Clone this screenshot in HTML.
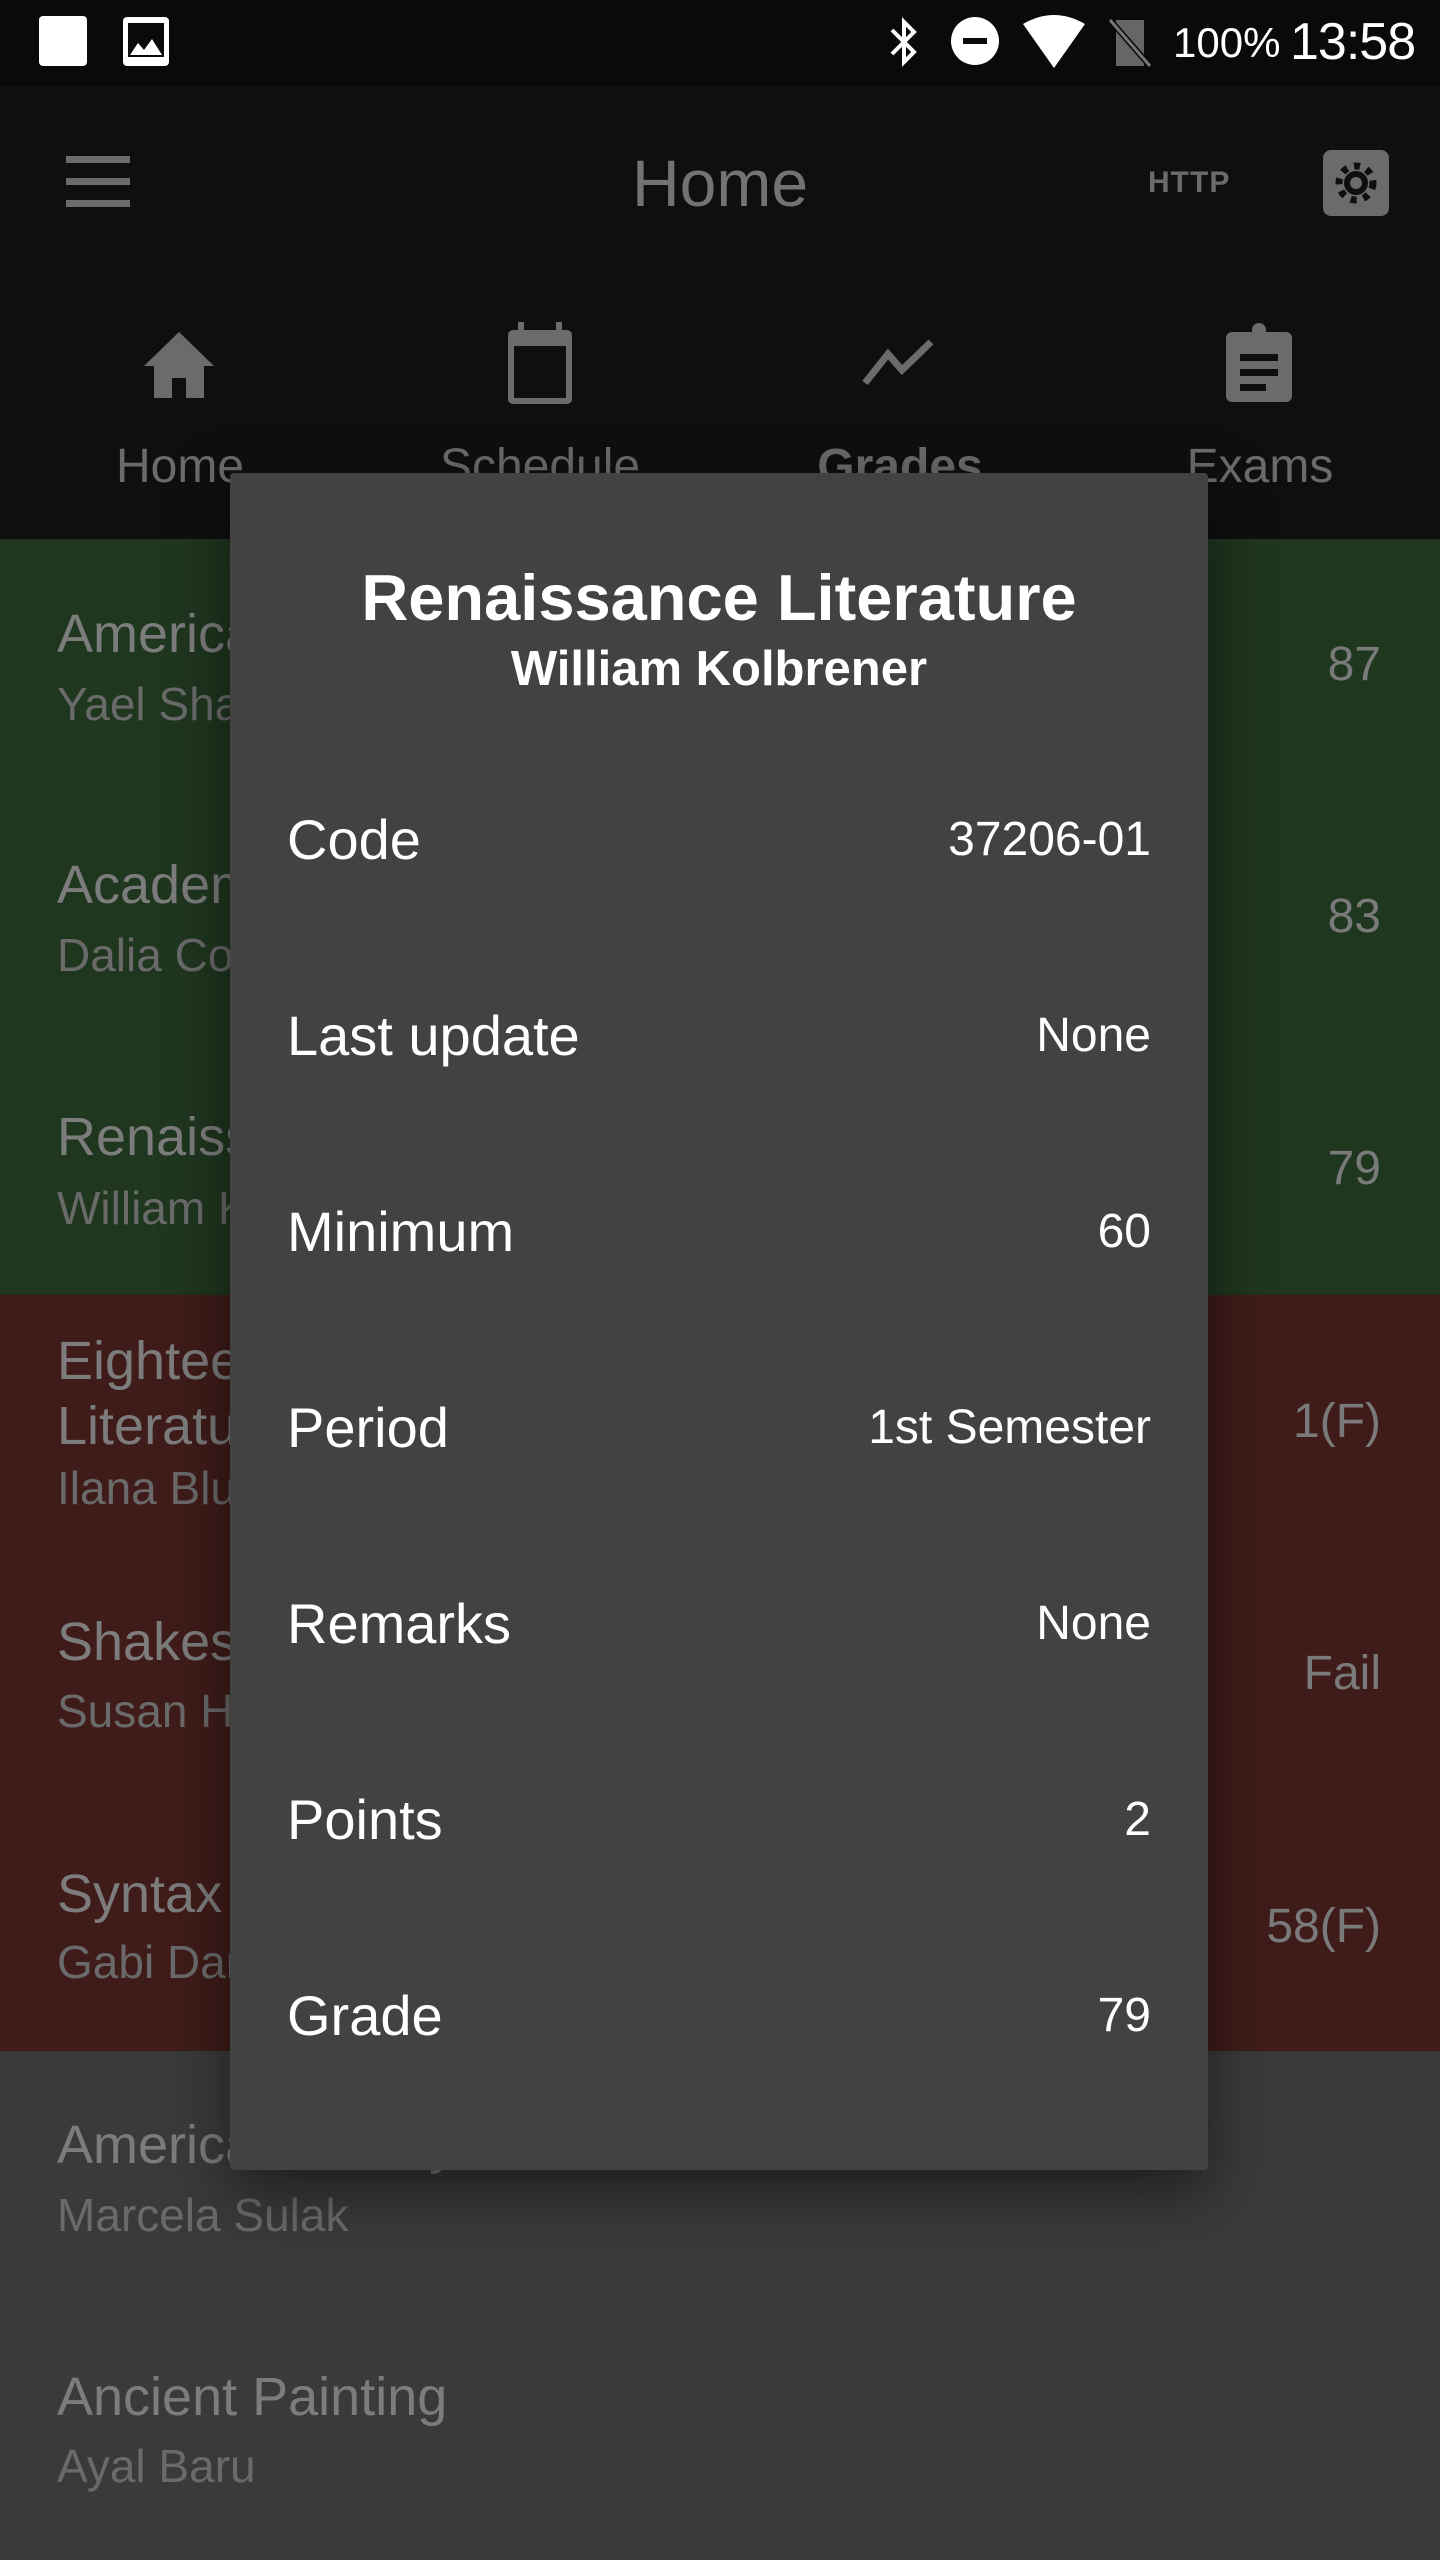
<!DOCTYPE html>
<html><head><meta charset="utf-8">
<style>
*{margin:0;padding:0;box-sizing:border-box}
body{width:1440px;height:2560px;overflow:hidden;background:#3a3a3a;font-family:"Liberation Sans",sans-serif;position:relative}
.abs{position:absolute}
.sb{left:0;top:0;width:1440px;height:86px;background:#0a0a0a}
.ab{left:0;top:86px;width:1440px;height:453px;background:#0f0f0f}
.green{left:0;top:539px;width:1440px;height:756px;background:#1f361f}
.red{left:0;top:1295px;width:1440px;height:756px;background:#3f1c19}
.gray{left:0;top:2051px;width:1440px;height:509px;background:#3a3a3a}
.t{position:absolute;left:57px;color:#7c7c7c;font-size:54px;white-space:nowrap;line-height:1}
.s{position:absolute;left:57px;color:#6a6a6a;font-size:46px;white-space:nowrap;line-height:1}
.g{position:absolute;right:59px;color:#7a7a7a;font-size:48px;line-height:1}
.tab{position:absolute;top:443px;color:#6b6b6b;font-size:48px;width:360px;text-align:center;line-height:1}
.dlg{left:230px;top:473px;width:978px;height:1697px;background:#424242;border-radius:4px;box-shadow:0 20px 60px rgba(0,0,0,.5)}
.row{position:absolute;left:57px;right:57px;height:80px;color:#fff}
.row .l{position:absolute;left:0;top:0;font-size:56px;line-height:80px}
.row .v{position:absolute;right:0;top:0;font-size:48px;line-height:80px}
</style></head><body>
<div class="abs sb"></div>
<div class="abs ab"></div>
<div class="abs green"></div>
<div class="abs red"></div>
<div class="abs gray"></div>

<!-- status bar -->
<div class="abs" style="left:39px;top:16px;width:48px;height:50px;background:#fff;border-radius:4px"></div>
<svg class="abs" style="left:123px;top:17px" width="46" height="49" viewBox="0 0 46 49"><rect width="46" height="49" rx="4" fill="#fff"/><rect x="5" y="6" width="36" height="34" fill="#0a0a0a"/><path d="M7 38 L15 26 L21 33 L29 22 L39 38Z" fill="#fff"/></svg>
<svg class="abs" style="left:884px;top:14px" width="40" height="56" viewBox="0 0 40 56"><path d="M8 16 L30 38 L20 48 L20 8 L30 18 L8 40" fill="none" stroke="#fff" stroke-width="4"/></svg>
<svg class="abs" style="left:950px;top:16px" width="50" height="50"><circle cx="25" cy="25" r="24" fill="#fff"/><rect x="13" y="22" width="24" height="6" fill="#0a0a0a"/></svg>
<svg class="abs" style="left:1023px;top:14px" width="62" height="54"><path d="M0 10 Q31 -8 62 10 L31 54Z" fill="#fff"/></svg>
<svg class="abs" style="left:1108px;top:18px" width="44" height="50"><path d="M8 2 H36 V48 H8Z" fill="#666"/><path d="M2 2 L42 48" stroke="#0a0a0a" stroke-width="6"/><path d="M2 2 L42 48" stroke="#777" stroke-width="3"/></svg>
<div class="abs" style="left:1173px;top:18px;color:#fff;font-size:42px;line-height:50px">100%</div>
<div class="abs" style="left:1290px;top:14px;color:#fff;font-size:52px;line-height:56px;letter-spacing:-1px">13:58</div>

<!-- toolbar -->
<div class="abs" style="left:66px;top:156px;width:64px;height:7px;background:#6b6b6b"></div>
<div class="abs" style="left:66px;top:178px;width:64px;height:7px;background:#6b6b6b"></div>
<div class="abs" style="left:66px;top:200px;width:64px;height:7px;background:#6b6b6b"></div>
<div class="abs" style="left:0;width:1440px;top:148px;text-align:center;color:#737373;font-size:66px;line-height:70px">Home</div>
<div class="abs" style="left:1148px;top:166px;color:#6b6b6b;font-size:30px;font-weight:bold;line-height:34px;letter-spacing:1px">HTTP</div>
<svg class="abs" style="left:1323px;top:150px" width="66" height="66" viewBox="0 0 66 66"><rect width="66" height="66" rx="8" fill="#6b6b6b"/><circle cx="33" cy="33" r="17" fill="none" stroke="#0f0f0f" stroke-width="7" stroke-dasharray="6 7"/><circle cx="33" cy="33" r="12" fill="#0f0f0f"/><circle cx="33" cy="33" r="6" fill="#6b6b6b"/></svg>

<!-- tabs -->
<svg class="abs" style="left:144px;top:328px" width="70" height="70" viewBox="0 0 70 70"><path d="M35 4 L70 38 H60 V70 H42 V50 H28 V70 H10 V38 H0Z" fill="#6b6b6b"/></svg>
<svg class="abs" style="left:504px;top:322px" width="72" height="84" viewBox="0 0 72 84"><rect x="4" y="8" width="64" height="74" rx="5" fill="#6b6b6b"/><rect x="10" y="24" width="52" height="52" fill="#0f0f0f"/><rect x="14" y="0" width="6" height="12" fill="#6b6b6b"/><rect x="52" y="0" width="6" height="12" fill="#6b6b6b"/></svg>
<svg class="abs" style="left:862px;top:338px" width="72" height="48" viewBox="0 0 72 48"><path d="M3 45 L26 16 L40 32 L69 4" fill="none" stroke="#6b6b6b" stroke-width="7"/></svg>
<svg class="abs" style="left:1226px;top:322px" width="66" height="80" viewBox="0 0 66 80"><rect x="0" y="10" width="66" height="70" rx="6" fill="#6b6b6b"/><circle cx="33" cy="8" r="7" fill="#6b6b6b"/><rect x="14" y="32" width="38" height="7" fill="#0f0f0f"/><rect x="14" y="47" width="38" height="7" fill="#0f0f0f"/><rect x="14" y="62" width="26" height="7" fill="#0f0f0f"/></svg>
<div class="tab" style="left:0">Home</div>
<div class="tab" style="left:360px">Schedule</div>
<div class="tab" style="left:720px;font-weight:bold">Grades</div>
<div class="tab" style="left:1080px">Exams</div>

<!-- list -->
<div class="t" style="top:607px">American Literature</div><div class="s" style="top:681px">Yael Shapira</div><div class="g" style="top:641px">87</div>
<div class="t" style="top:858px">Academic Writing</div><div class="s" style="top:932px">Dalia Cohen</div><div class="g" style="top:893px">83</div>
<div class="t" style="top:1110px">Renaissance Literature</div><div class="s" style="top:1185px">William Kolbrener</div><div class="g" style="top:1145px">79</div>
<div class="t" style="top:1334px">Eighteenth Century</div><div class="t" style="top:1399px">Literature</div><div class="s" style="top:1465px">Ilana Blumberg</div><div class="g" style="top:1398px">1(F)</div>
<div class="t" style="top:1615px">Shakespeare</div><div class="s" style="top:1688px">Susan Handelman</div><div class="g" style="top:1650px">Fail</div>
<div class="t" style="top:1867px">Syntax</div><div class="s" style="top:1939px">Gabi Danon</div><div class="g" style="top:1903px">58(F)</div>
<div class="t" style="top:2118px">American Poetry</div><div class="s" style="top:2192px">Marcela Sulak</div>
<div class="t" style="top:2370px">Ancient Painting</div><div class="s" style="top:2443px">Ayal Baru</div>

<!-- dialog -->
<div class="abs dlg">
  <div class="abs" style="left:0;width:978px;top:90px;text-align:center;color:#fff;font-size:65px;font-weight:bold;line-height:70px">Renaissance Literature</div>
  <div class="abs" style="left:0;width:978px;top:170px;text-align:center;color:#fff;font-size:49px;font-weight:bold;line-height:52px">William Kolbrener</div>
  <div class="row" style="top:327px"><span class="l">Code</span><span class="v">37206-01</span></div>
  <div class="row" style="top:523px"><span class="l">Last update</span><span class="v">None</span></div>
  <div class="row" style="top:719px"><span class="l">Minimum</span><span class="v">60</span></div>
  <div class="row" style="top:915px"><span class="l">Period</span><span class="v">1st Semester</span></div>
  <div class="row" style="top:1111px"><span class="l">Remarks</span><span class="v">None</span></div>
  <div class="row" style="top:1307px"><span class="l">Points</span><span class="v">2</span></div>
  <div class="row" style="top:1503px"><span class="l">Grade</span><span class="v">79</span></div>
</div>
</body></html>
